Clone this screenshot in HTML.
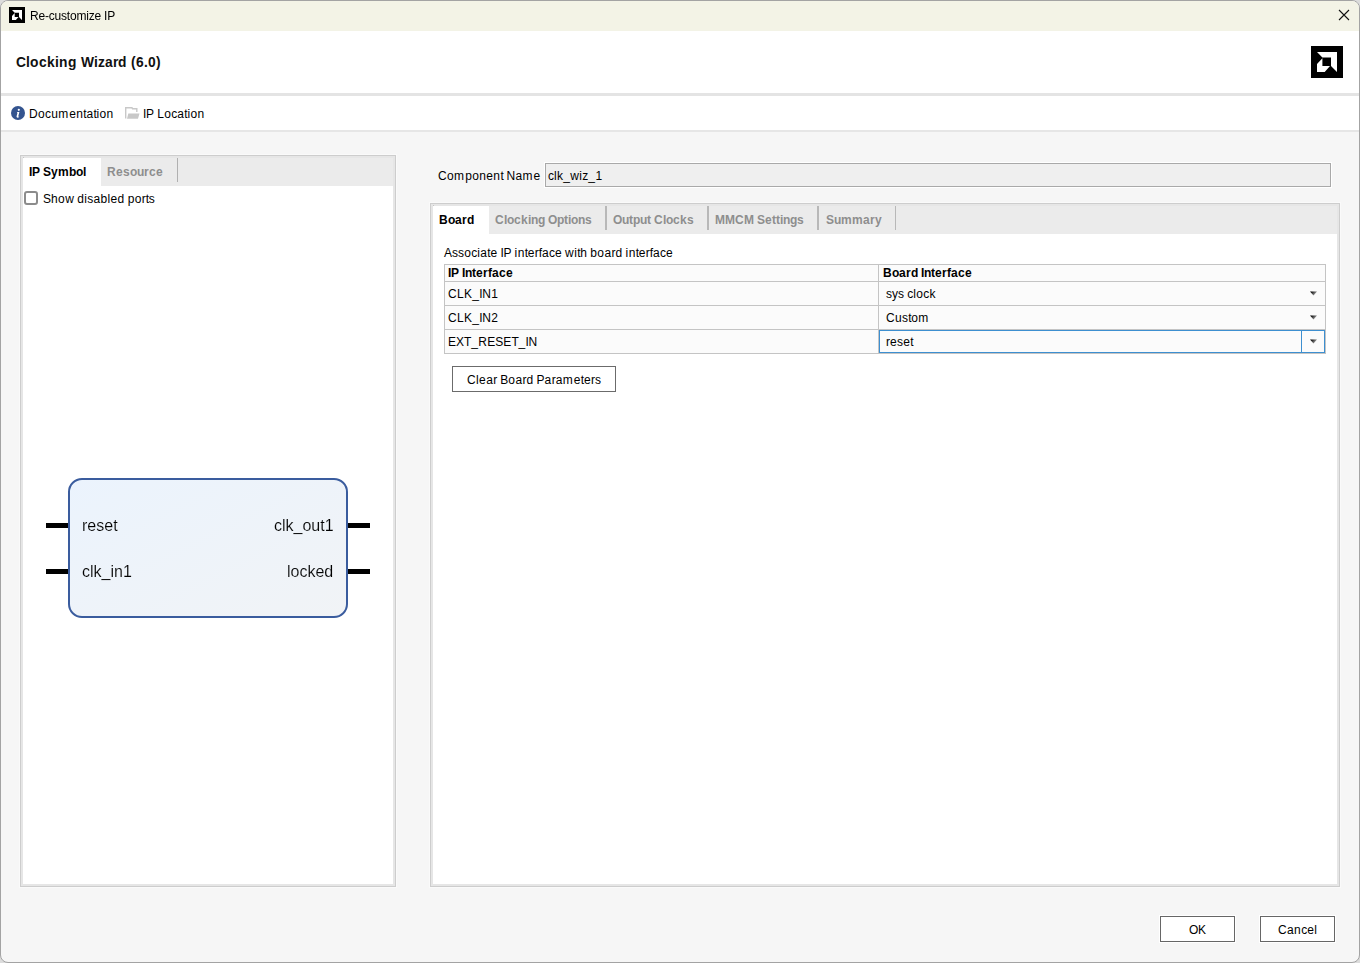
<!DOCTYPE html>
<html><head><meta charset="utf-8">
<style>
*{margin:0;padding:0;box-sizing:border-box}
html,body{width:1360px;height:963px;overflow:hidden;background:#dcdcdc}
body{position:relative;font-family:"Liberation Sans",sans-serif;color:#000}
.a{position:absolute}
.t{position:absolute;white-space:nowrap;line-height:1;font-size:12px}
.t i{display:inline-block;font-style:normal;overflow:visible}
#win{position:absolute;left:0;top:0;width:1360px;height:963px;background:#f6f6f6;border:1px solid #a3a3a3;border-radius:8px;overflow:hidden}
</style></head><body>
<div id="win">
  <div class="a" style="left:0;top:0;width:1358px;height:30px;background:#f3f3e6"></div>
  <div class="a" style="left:0;top:30px;width:1358px;height:62px;background:#fff"></div>
  <div class="a" style="left:0;top:92px;width:1358px;height:3px;background:#e4e4e4"></div>
  <div class="a" style="left:0;top:95px;width:1358px;height:34px;background:#fff"></div>
  <div class="a" style="left:0;top:129px;width:1358px;height:2px;background:#e6e6e6"></div>
</div>

<svg class="a" style="left:9px;top:7px" width="16" height="16" viewBox="0 0 32 32"><rect width="32" height="32" fill="#000"/><path d="M6 6H26V26L20 20V11.4H11.4Z M11.4 12.2V20H19L13.7 26H6V18Z" fill="#fff"/></svg>
<div class="t" style="left:30px;top:10px;font-size:12px;color:#000;letter-spacing:-0.2px;will-change:transform">Re-customize IP</div>
<svg class="a" style="left:1338px;top:9px" width="12" height="12" viewBox="0 0 12 12"><path d="M1 1L11 11M11 1L1 11" stroke="#111" stroke-width="1.1"/></svg>
<div class="t" style="left:16px;top:56px;font-size:13.8px;font-weight:bold;color:#111"><i style="width:10px">C</i><i style="width:4px">l</i><i style="width:9px">o</i><i style="width:8px">c</i><i style="width:8px">k</i><i style="width:4px">i</i><i style="width:9px">n</i><i style="width:9px">g</i><i style="width:4px">&nbsp;</i><i style="width:13px">W</i><i style="width:4px">i</i><i style="width:7px">z</i><i style="width:8px">a</i><i style="width:5px">r</i><i style="width:9px">d</i><i style="width:4px">&nbsp;</i><i style="width:5px">(</i><i style="width:8px">6</i><i style="width:4px">.</i><i style="width:8px">0</i><i style="width:5px">)</i></div>
<svg class="a" style="left:1311px;top:46px" width="32" height="32" viewBox="0 0 32 32"><rect width="32" height="32" fill="#000"/><path d="M6 6H26V26L20 20V11.4H11.4Z M11.4 12.2V20H19L13.7 26H6V18Z" fill="#fff"/></svg>
<svg class="a" style="left:11px;top:106px" width="14" height="14" viewBox="0 0 14 14"><circle cx="7" cy="7" r="7" fill="#34548f"/><circle cx="7.8" cy="3.8" r="1.1" fill="#fff"/><path d="M6.1 5.9H8.4L7.3 10.3Q7.2 10.8 7.8 10.6L8.2 10.5L7.9 11.3Q7 11.8 6.1 11.6Q5.3 11.3 5.6 10.3L6.5 6.8H5.9Z" fill="#fff"/></svg>
<div class="t" style="left:29px;top:108px;font-size:12px"><i style="width:9.06px">D</i><i style="width:7.06px">o</i><i style="width:6.06px">c</i><i style="width:7.06px">u</i><i style="width:11.06px">m</i><i style="width:7.06px">e</i><i style="width:7.06px">n</i><i style="width:3.06px">t</i><i style="width:7.06px">a</i><i style="width:3.06px">t</i><i style="width:3.06px">i</i><i style="width:7.06px">o</i><i style="width:7.06px">n</i></div>
<svg class="a" style="left:125px;top:107px" width="15" height="12" viewBox="0 0 15 12"><path d="M0.7 11.5V0.7H7L7.5 1.8H11.8V5" fill="none" stroke="#c8c8c8" stroke-width="1.4"/><path d="M3.3 6.4H14.5L13 11.8H2Z" fill="#c8c8c8"/></svg>
<div class="t" style="left:143px;top:108px;font-size:12px"><i style="width:3.06px">I</i><i style="width:8.06px">P</i><i style="width:3.06px">&nbsp;</i><i style="width:7.06px">L</i><i style="width:7.06px">o</i><i style="width:6.06px">c</i><i style="width:7.06px">a</i><i style="width:3.06px">t</i><i style="width:3.06px">i</i><i style="width:7.06px">o</i><i style="width:7.06px">n</i></div>
<div class="a" style="left:20px;top:155px;width:376px;height:732px;border:1px solid #cdcdcd;background:#e6e6e6;box-shadow:0 0 0 1px #fafafa"></div>
<div class="a" style="left:23px;top:158px;width:370px;height:726px;background:#fff"></div>
<div class="a" style="left:23px;top:158px;width:370px;height:28px;background:#ebebeb"></div>
<div class="a" style="left:23px;top:158px;width:78px;height:28px;background:#fff"></div>
<div class="a" style="left:23px;top:157px;width:1px;height:1px;background:#c4c4c4"></div>
<div class="a" style="left:177px;top:158px;width:1px;height:24px;background:#b0b0b0"></div>
<div class="a" style="left:24px;top:191px;width:14px;height:14px;border:2px solid #8c8c8c;border-radius:3px;background:#fff"></div>

<div class="t" style="left:29px;top:166px;font-size:12px;font-weight:bold"><i style="width:3px">I</i><i style="width:8px">P</i><i style="width:3px">&nbsp;</i><i style="width:8px">S</i><i style="width:7px">y</i><i style="width:11px">m</i><i style="width:7px">b</i><i style="width:7px">o</i><i style="width:3px">l</i></div>
<div class="t" style="left:107px;top:166px;font-size:12px;font-weight:bold;color:#8e8e8e"><i style="width:9px">R</i><i style="width:7px">e</i><i style="width:7px">s</i><i style="width:7px">o</i><i style="width:7px">u</i><i style="width:5px">r</i><i style="width:7px">c</i><i style="width:7px">e</i></div>
<div class="t" style="left:43px;top:193px;font-size:12px"><i style="width:8.06px">S</i><i style="width:7.06px">h</i><i style="width:7.06px">o</i><i style="width:9.06px">w</i><i style="width:3.06px">&nbsp;</i><i style="width:7.06px">d</i><i style="width:3.06px">i</i><i style="width:6.06px">s</i><i style="width:7.06px">a</i><i style="width:7.06px">b</i><i style="width:3.06px">l</i><i style="width:7.06px">e</i><i style="width:7.06px">d</i><i style="width:3.06px">&nbsp;</i><i style="width:7.06px">p</i><i style="width:7.06px">o</i><i style="width:4.06px">r</i><i style="width:3.06px">t</i><i style="width:6.06px">s</i></div>
<svg class="a" style="left:40px;top:470px" width="340" height="160" viewBox="0 0 340 160">
  <defs><linearGradient id="g" x1="0" y1="0" x2="1" y2="1"><stop offset="0" stop-color="#ebf3fd"/><stop offset="1" stop-color="#f1f3f6"/></linearGradient></defs>
  <rect x="29" y="9" width="278" height="138" rx="13" fill="url(#g)" stroke="#3a5c9e" stroke-width="2"/>
  <rect x="6" y="53" width="22" height="5" fill="#000"/>
  <rect x="6" y="99" width="22" height="5" fill="#000"/>
  <rect x="308" y="53" width="22" height="5" fill="#000"/>
  <rect x="308" y="99" width="22" height="5" fill="#000"/>
</svg>
<div class="t" style="left:82px;top:518px;font-size:16px;color:#000;-webkit-text-stroke:0.12px #eef3f9;will-change:transform">reset</div>
<div class="t" style="left:82px;top:564px;font-size:16px;color:#000;-webkit-text-stroke:0.12px #eef3f9;will-change:transform">clk_in1</div>
<div class="t" style="left:274px;top:518px;font-size:16px;color:#000;-webkit-text-stroke:0.12px #eef3f9;will-change:transform">clk_out1</div>
<div class="t" style="left:287px;top:564px;font-size:16px;color:#000;-webkit-text-stroke:0.12px #eef3f9;will-change:transform">locked</div>
<div class="t" style="left:438px;top:170px;font-size:12px"><i style="width:9.06px">C</i><i style="width:7.06px">o</i><i style="width:11.06px">m</i><i style="width:7.06px">p</i><i style="width:7.06px">o</i><i style="width:7.06px">n</i><i style="width:7.06px">e</i><i style="width:7.06px">n</i><i style="width:3.06px">t</i><i style="width:3.06px">&nbsp;</i><i style="width:9.06px">N</i><i style="width:7.06px">a</i><i style="width:11.06px">m</i><i style="width:7.06px">e</i></div>
<div class="a" style="left:545px;top:163px;width:786px;height:24px;border:1px solid #a9a9a9;background:#efefef;box-shadow:0 0 0 1px #fff"></div>
<div class="t" style="left:548px;top:170px;font-size:12px"><i style="width:6.06px">c</i><i style="width:3.06px">l</i><i style="width:6.06px">k</i><i style="width:7.06px">_</i><i style="width:9.06px">w</i><i style="width:3.06px">i</i><i style="width:6.06px">z</i><i style="width:7.06px">_</i><i style="width:7.06px">1</i></div>
<div class="a" style="left:430px;top:203px;width:910px;height:684px;border:1px solid #cdcdcd;background:#e6e6e6;box-shadow:0 0 0 1px #fafafa"></div>
<div class="a" style="left:433px;top:206px;width:904px;height:678px;background:#fff"></div>
<div class="a" style="left:433px;top:206px;width:904px;height:28px;background:#ebebeb"></div>
<div class="a" style="left:433px;top:206px;width:56px;height:28px;background:#fff"></div>
<div class="a" style="left:433px;top:205px;width:1px;height:1px;background:#c4c4c4"></div>
<div class="a" style="left:605px;top:206px;width:2px;height:24px;background:#b8b8b8"></div>
<div class="a" style="left:707px;top:206px;width:2px;height:24px;background:#b8b8b8"></div>
<div class="a" style="left:817px;top:206px;width:2px;height:24px;background:#b8b8b8"></div>
<div class="a" style="left:895px;top:206px;width:1px;height:24px;background:#b8b8b8"></div>

<div class="t" style="left:439px;top:214px;font-size:12px;font-weight:bold"><i style="width:9px">B</i><i style="width:7px">o</i><i style="width:7px">a</i><i style="width:5px">r</i><i style="width:7px">d</i></div>
<div class="t" style="left:495px;top:214px;font-size:12px;font-weight:bold;color:#8e8e8e"><i style="width:9px">C</i><i style="width:3px">l</i><i style="width:7px">o</i><i style="width:7px">c</i><i style="width:7px">k</i><i style="width:3px">i</i><i style="width:7px">n</i><i style="width:7px">g</i><i style="width:3px">&nbsp;</i><i style="width:9px">O</i><i style="width:7px">p</i><i style="width:4px">t</i><i style="width:3px">i</i><i style="width:7px">o</i><i style="width:7px">n</i><i style="width:7px">s</i></div>
<div class="t" style="left:613px;top:214px;font-size:12px;font-weight:bold;color:#8e8e8e"><i style="width:9px">O</i><i style="width:7px">u</i><i style="width:4px">t</i><i style="width:7px">p</i><i style="width:7px">u</i><i style="width:4px">t</i><i style="width:3px">&nbsp;</i><i style="width:9px">C</i><i style="width:3px">l</i><i style="width:7px">o</i><i style="width:7px">c</i><i style="width:7px">k</i><i style="width:7px">s</i></div>
<div class="t" style="left:715px;top:214px;font-size:12px;font-weight:bold;color:#8e8e8e"><i style="width:10px">M</i><i style="width:10px">M</i><i style="width:9px">C</i><i style="width:10px">M</i><i style="width:3px">&nbsp;</i><i style="width:8px">S</i><i style="width:7px">e</i><i style="width:4px">t</i><i style="width:4px">t</i><i style="width:3px">i</i><i style="width:7px">n</i><i style="width:7px">g</i><i style="width:7px">s</i></div>
<div class="t" style="left:826px;top:214px;font-size:12px;font-weight:bold;color:#8e8e8e"><i style="width:8px">S</i><i style="width:7px">u</i><i style="width:11px">m</i><i style="width:11px">m</i><i style="width:7px">a</i><i style="width:5px">r</i><i style="width:7px">y</i></div>
<div class="t" style="left:444px;top:247px;font-size:12px"><i style="width:8.06px">A</i><i style="width:6.06px">s</i><i style="width:6.06px">s</i><i style="width:7.06px">o</i><i style="width:6.06px">c</i><i style="width:3.06px">i</i><i style="width:7.06px">a</i><i style="width:3.06px">t</i><i style="width:7.06px">e</i><i style="width:3.06px">&nbsp;</i><i style="width:3.06px">I</i><i style="width:8.06px">P</i><i style="width:3.06px">&nbsp;</i><i style="width:3.06px">i</i><i style="width:7.06px">n</i><i style="width:3.06px">t</i><i style="width:7.06px">e</i><i style="width:4.06px">r</i><i style="width:3.06px">f</i><i style="width:7.06px">a</i><i style="width:6.06px">c</i><i style="width:7.06px">e</i><i style="width:3.06px">&nbsp;</i><i style="width:9.06px">w</i><i style="width:3.06px">i</i><i style="width:3.06px">t</i><i style="width:7.06px">h</i><i style="width:3.06px">&nbsp;</i><i style="width:7.06px">b</i><i style="width:7.06px">o</i><i style="width:7.06px">a</i><i style="width:4.06px">r</i><i style="width:7.06px">d</i><i style="width:3.06px">&nbsp;</i><i style="width:3.06px">i</i><i style="width:7.06px">n</i><i style="width:3.06px">t</i><i style="width:7.06px">e</i><i style="width:4.06px">r</i><i style="width:3.06px">f</i><i style="width:7.06px">a</i><i style="width:6.06px">c</i><i style="width:7.06px">e</i></div>
<div class="a" style="left:444px;top:264px;width:882px;height:90px;border:1px solid #c4c4c4;background:#fbfbfb"></div>
<div class="a" style="left:445px;top:281px;width:880px;height:1px;background:#c4c4c4"></div>
<div class="a" style="left:445px;top:305px;width:880px;height:1px;background:#c4c4c4"></div>
<div class="a" style="left:445px;top:329px;width:880px;height:1px;background:#c4c4c4"></div>
<div class="a" style="left:878px;top:265px;width:1px;height:88px;background:#c4c4c4"></div>
<div class="a" style="left:879px;top:330px;width:446px;height:23px;border:1px solid #3d8fd0"></div>
<div class="a" style="left:1301px;top:331px;width:1px;height:21px;background:#3d8fd0"></div>
<svg class="a" style="left:0;top:0" width="0" height="0"><defs><linearGradient id="ag" x1="0" y1="0" x2="1" y2="0.5"><stop offset="0.15" stop-color="#000"/><stop offset="1" stop-color="#b0b0b0"/></linearGradient></defs></svg>
<svg class="a" style="left:1309px;top:291px" width="9" height="6"><path d="M1 0.5H8L4.5 4.5Z" fill="url(#ag)"/></svg>
<svg class="a" style="left:1309px;top:315px" width="9" height="6"><path d="M1 0.5H8L4.5 4.5Z" fill="url(#ag)"/></svg>
<svg class="a" style="left:1309px;top:339px" width="9" height="6"><path d="M1 0.5H8L4.5 4.5Z" fill="url(#ag)"/></svg>

<div class="t" style="left:448px;top:267px;font-size:12px;font-weight:bold"><i style="width:3px">I</i><i style="width:8px">P</i><i style="width:3px">&nbsp;</i><i style="width:3px">I</i><i style="width:7px">n</i><i style="width:4px">t</i><i style="width:7px">e</i><i style="width:5px">r</i><i style="width:4px">f</i><i style="width:7px">a</i><i style="width:7px">c</i><i style="width:7px">e</i></div>
<div class="t" style="left:883px;top:267px;font-size:12px;font-weight:bold"><i style="width:9px">B</i><i style="width:7px">o</i><i style="width:7px">a</i><i style="width:5px">r</i><i style="width:7px">d</i><i style="width:3px">&nbsp;</i><i style="width:3px">I</i><i style="width:7px">n</i><i style="width:4px">t</i><i style="width:7px">e</i><i style="width:5px">r</i><i style="width:4px">f</i><i style="width:7px">a</i><i style="width:7px">c</i><i style="width:7px">e</i></div>
<div class="t" style="left:448px;top:288px;font-size:12px"><i style="width:9.06px">C</i><i style="width:7.06px">L</i><i style="width:8.06px">K</i><i style="width:7.06px">_</i><i style="width:3.06px">I</i><i style="width:9.06px">N</i><i style="width:7.06px">1</i></div>
<div class="t" style="left:448px;top:312px;font-size:12px"><i style="width:9.06px">C</i><i style="width:7.06px">L</i><i style="width:8.06px">K</i><i style="width:7.06px">_</i><i style="width:3.06px">I</i><i style="width:9.06px">N</i><i style="width:7.06px">2</i></div>
<div class="t" style="left:448px;top:336px;font-size:12px"><i style="width:8.06px">E</i><i style="width:8.06px">X</i><i style="width:7.06px">T</i><i style="width:7.06px">_</i><i style="width:9.06px">R</i><i style="width:8.06px">E</i><i style="width:8.06px">S</i><i style="width:8.06px">E</i><i style="width:7.06px">T</i><i style="width:7.06px">_</i><i style="width:3.06px">I</i><i style="width:9.06px">N</i></div>
<div class="t" style="left:886px;top:288px;font-size:12px"><i style="width:6.06px">s</i><i style="width:6.06px">y</i><i style="width:6.06px">s</i><i style="width:3.06px">&nbsp;</i><i style="width:6.06px">c</i><i style="width:3.06px">l</i><i style="width:7.06px">o</i><i style="width:6.06px">c</i><i style="width:6.06px">k</i></div>
<div class="t" style="left:886px;top:312px;font-size:12px"><i style="width:9.06px">C</i><i style="width:7.06px">u</i><i style="width:6.06px">s</i><i style="width:3.06px">t</i><i style="width:7.06px">o</i><i style="width:11.06px">m</i></div>
<div class="t" style="left:886px;top:336px;font-size:12px"><i style="width:4.06px">r</i><i style="width:7.06px">e</i><i style="width:6.06px">s</i><i style="width:7.06px">e</i><i style="width:3.06px">t</i></div>
<div class="a" style="left:452px;top:366px;width:164px;height:26px;border:1px solid #6b6b6b;background:#fff"></div>
<div class="t" style="left:467px;top:374px;font-size:12px"><i style="width:9.06px">C</i><i style="width:3.06px">l</i><i style="width:7.06px">e</i><i style="width:7.06px">a</i><i style="width:4.06px">r</i><i style="width:3.06px">&nbsp;</i><i style="width:8.06px">B</i><i style="width:7.06px">o</i><i style="width:7.06px">a</i><i style="width:4.06px">r</i><i style="width:7.06px">d</i><i style="width:3.06px">&nbsp;</i><i style="width:8.06px">P</i><i style="width:7.06px">a</i><i style="width:4.06px">r</i><i style="width:7.06px">a</i><i style="width:11.06px">m</i><i style="width:7.06px">e</i><i style="width:3.06px">t</i><i style="width:7.06px">e</i><i style="width:4.06px">r</i><i style="width:6.06px">s</i></div>
<div class="a" style="left:1160px;top:916px;width:75px;height:26px;border:1px solid #666;background:#fff;box-shadow:0 0 0 1px #fff"></div>
<div class="a" style="left:1260px;top:916px;width:75px;height:26px;border:1px solid #666;background:#fff;box-shadow:0 0 0 1px #fff"></div>
<div class="t" style="left:1189px;top:924px;font-size:12px"><i style="width:9.06px">O</i><i style="width:8.06px">K</i></div>
<div class="t" style="left:1278px;top:924px;font-size:12px"><i style="width:9.06px">C</i><i style="width:7.06px">a</i><i style="width:7.06px">n</i><i style="width:6.06px">c</i><i style="width:7.06px">e</i><i style="width:3.06px">l</i></div>
</body></html>
